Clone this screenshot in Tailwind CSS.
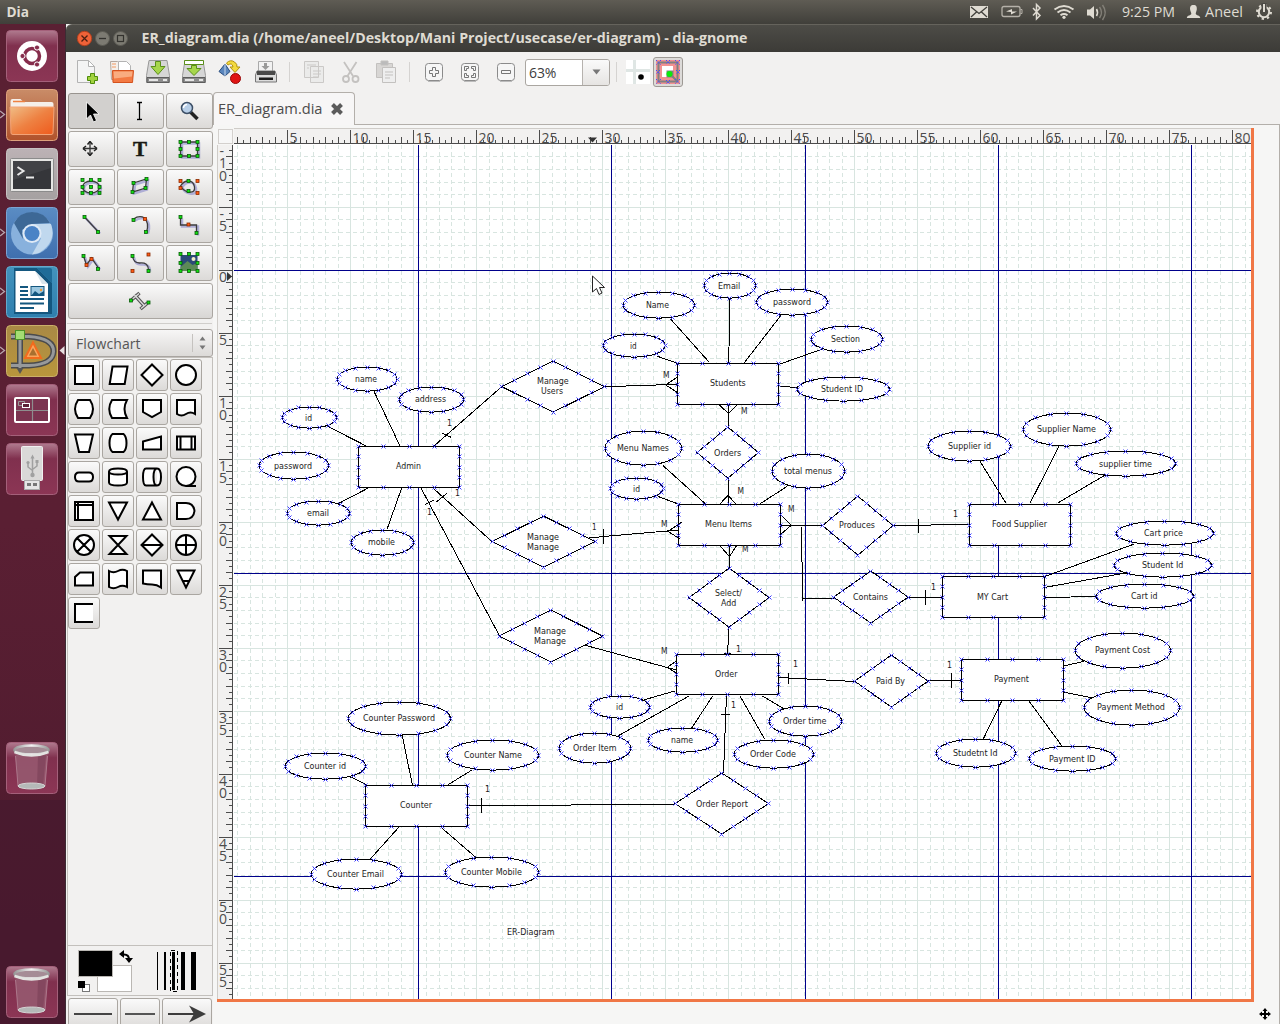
<!DOCTYPE html>
<html lang="en">
<head>
<meta charset="utf-8">
<title>ER_diagram.dia - dia-gnome</title>
<script src="https://cdn.jsdelivr.net/npm/@tailwindcss/browser@4"></script>
</head>
<body class="w-[1280px] h-[1024px] overflow-hidden bg-[#f2f1f0] font-['Open_Sans',sans-serif] text-[#4c4c4c]">
<div class="flex flex-col w-[1280px] h-[1024px] overflow-hidden">

  <!-- top panel -->
  <header class="flex h-[24px] shrink-0 items-center bg-linear-to-b from-[#5f5c54] to-[#403f3a]">
    <svg class="w-[1280px] h-[24px]" viewBox="0 0 1280 24" fill="none" stroke="#dfdbd2">
      <g fill="#dfdbd2" stroke="none" font-family="'Open Sans',sans-serif" font-size="14">
        <text x="6.500" y="17" font-weight="700" textLength="22.500" lengthAdjust="spacingAndGlyphs">Dia</text>
        <text x="1122" y="17" textLength="53" lengthAdjust="spacingAndGlyphs">9:25 PM</text>
        <text x="1205" y="17" textLength="38" lengthAdjust="spacingAndGlyphs">Aneel</text>
      </g>
      <rect x="970" y="6" width="18" height="12" fill="#dfdbd2" stroke="none"/>
      <path d="M971 7l8 6.500 8-6.500M971 17l5.500-5M987 17l-5.500-5" stroke="#403f3a" stroke-width="1.300"/>
      <rect x="1002" y="6.500" width="18" height="10" rx="2" stroke-width="1.300" stroke="#b5b1a9"/>
      <path d="M1020.500 9.500h1.500v4h-1.500" stroke="#b5b1a9"/>
      <path d="M1006 11.500l6-2.500v2.500h5l-6 3v-2.500z" fill="#dfdbd2" stroke="none"/>
      <path d="M1033 8l7 7.500-3.500 3.500v-14.500l3.500 3.500-7 7.500" stroke-width="1.500"/>
      <path d="M1054.500 9.500q9.500-7 19 0M1057.500 12.500q6.500-5 13 0M1060.500 15.300q3.500-2.500 7 0" stroke-width="1.900"/>
      <circle cx="1064" cy="17.300" r="1.600" fill="#dfdbd2" stroke="none"/>
      <path d="M1087 9.500h3l4-3.500v13l-4-3.500h-3z" fill="#dfdbd2" stroke="none"/>
      <path d="M1096.500 9q2 3.500 0 7" stroke-width="1.600"/>
      <path d="M1099.500 7q4 5.500 0 11M1102.500 5q5.500 7.500 0 15" stroke="#827f77" stroke-width="1.500"/>
      <path d="M1193.500 5c3 0 3.500 2 3.300 4.500-.2 2-1.300 3-1 4.500.5 1.500 4 1 4.500 4h-13.500c.5-3 4-2.500 4.500-4 .2-1.500-1-2.500-1.200-4.500-.2-2.500.4-4.500 3.400-4.500z" fill="#dfdbd2" stroke="none"/>
      <circle cx="1264" cy="12" r="5.200" stroke-width="2"/>
      <circle cx="1264" cy="12" r="7" stroke-width="2" stroke-dasharray="2.300 3.200"/>
      <path d="M1264 3v9" stroke="#4b4944" stroke-width="5"/><path d="M1264 4v8" stroke-width="2"/>
    </svg>
  </header>

  <div class="flex grow min-h-0">
    <!-- launcher -->
    <nav class="flex flex-col w-[65px] shrink-0 bg-linear-to-b from-[#5a2033] via-[#5a1f33] to-[#4b1a2d]">
      <svg id="launcher" class="w-[65px] h-[1000px]" viewBox="0 24 65 1000" fill="none">
        <defs>
          <linearGradient id="wine" x1="0" y1="0" x2="0" y2="1"><stop offset="0" stop-color="#b07b8f"/><stop offset=".3" stop-color="#80304e"/><stop offset="1" stop-color="#8c3655"/></linearGradient>
          <linearGradient id="org" x1="0" y1="0" x2="0" y2="1"><stop offset="0" stop-color="#c98c68"/><stop offset="1" stop-color="#b1522b"/></linearGradient>
          <linearGradient id="fold" x1="0" y1="0" x2="1" y2="1"><stop offset="0" stop-color="#f0bd86"/><stop offset=".5" stop-color="#ee8142"/><stop offset="1" stop-color="#ef5a1c"/></linearGradient>
          <linearGradient id="gry" x1="0" y1="0" x2="0" y2="1"><stop offset="0" stop-color="#bcb2b5"/><stop offset="1" stop-color="#a5a1a1"/></linearGradient>
          <linearGradient id="blu" x1="0" y1="0" x2="0" y2="1"><stop offset="0" stop-color="#5a8cc4"/><stop offset="1" stop-color="#3f6fae"/></linearGradient>
          <linearGradient id="teal" x1="0" y1="0" x2="0" y2="1"><stop offset="0" stop-color="#4393bd"/><stop offset="1" stop-color="#2f7fae"/></linearGradient>
          <linearGradient id="gold" x1="0" y1="0" x2="0" y2="1"><stop offset="0" stop-color="#a98945"/><stop offset="1" stop-color="#b9963c"/></linearGradient>
          <linearGradient id="steel" x1="0" y1="0" x2="1" y2="0"><stop offset="0" stop-color="#999"/><stop offset=".5" stop-color="#f3f3f3"/><stop offset="1" stop-color="#999"/></linearGradient>
          <g id="trash">
            <rect x="6.500" y=".5" width="51" height="51" rx="4" fill="url(#wine)" stroke="#a4607a"/>
            <path d="M15 9h33l-3 36q-13 4-27 0z" fill="#96596f" opacity=".9"/>
            <path d="M38 14l-1 30h6l3-31z" fill="#7a3f57" opacity=".6"/>
            <path d="M15.500 14l2.500 30M47.500 14l-2.500 30" stroke="#b98c9d" opacity=".7"/>
            <ellipse cx="31.500" cy="44" rx="13.500" ry="3" fill="#b5b9b8" stroke="#d5d5d5"/>
            <ellipse cx="31.500" cy="8" rx="17" ry="4.500" fill="#a58c96" stroke="url(#steel)" stroke-width="2.500"/>
            <path d="M14.500 10q17 7 34 0" stroke="#e3e3e1" stroke-width="2.500"/>
          </g>
        </defs>
        <path d="M0 800h65v224h-65z" fill="#471a2f" opacity=".75"/>
        <!-- dash -->
        <g transform="translate(0 30)">
          <rect x="6.500" y=".5" width="51" height="51" rx="4" fill="url(#wine)" stroke="#a4607a"/>
          <circle cx="32" cy="26" r="15" fill="#fff"/>
          <circle cx="32" cy="26" r="7.500" stroke="#862d4c" stroke-width="3.500"/>
          <g fill="#862d4c" stroke="#fff" stroke-width="1"><circle cx="22.500" cy="26" r="2.600"/><circle cx="37" cy="17.500" r="2.600"/><circle cx="37" cy="34.500" r="2.600"/></g>
        </g>
        <!-- files -->
        <g transform="translate(0 89)">
          <rect x="6.500" y=".5" width="51" height="51" rx="4" fill="url(#org)" stroke="#dda17c"/>
          <path d="M10.500 21v-9q0-2 2-2h8l3 3h28q2 0 2 2v6z" fill="#f5efe9"/><path d="M13 12.500h12" stroke="#ee8142" stroke-width="1.500"/>
          <path d="M10 18h44l-1 26q0 1.500-2 1.500h-38q-2 0-2-1.500z" fill="url(#fold)" stroke="#f3a377"/>
        </g>
        <!-- terminal -->
        <g transform="translate(0 148)">
          <rect x="6.500" y=".5" width="51" height="51" rx="4" fill="url(#gry)" stroke="#c7c2c2"/>
          <rect x="10.500" y="10.500" width="43" height="33" rx="1" fill="#e6e6e4" stroke="#8b8b8b"/>
          <rect x="13" y="13" width="38" height="28" fill="#35363a"/>
          <path d="M13 13h38v7l-38 12z" fill="#4a4b4f" opacity=".6"/>
          <path d="M17.500 19l6 4-6 4M26 29.500h8" stroke="#e9e9e9" stroke-width="2"/>
        </g>
        <!-- chromium -->
        <g transform="translate(0 207)">
          <rect x="6.500" y=".5" width="51" height="51" rx="4" fill="url(#blu)" stroke="#7ba3d2"/>
          <circle cx="32" cy="26.500" r="21" fill="#88b1dd"/>
          <path d="M14 16q6-11 18-11t18 11l-18 1-10 6 1 9z" fill="#3d6896"/>
          <path d="M32 17h19q6 18-12 29l-7 1.500 9-16z" fill="#c0d8ee"/>
          <circle cx="32" cy="26.500" r="9.500" fill="#dfeaf6"/><circle cx="32" cy="26.500" r="7.500" fill="#4a83c6"/>
        </g>
        <!-- writer -->
        <g transform="translate(0 266)">
          <rect x="6.500" y=".5" width="51" height="51" rx="4" fill="url(#teal)" stroke="#65a9cc"/>
          <path d="M14 2h23l15 15v31H14z" fill="#14577f"/><path d="M37 2l15 15v-13q0-2-2-2z" fill="#1f6c98"/>
          <path d="M15.500 5h19.500l13 13v28h-32.500z" fill="#fff"/><path d="M35 5l13 13h-6z" fill="#d9e5ec"/>
          <path d="M20 21h8M20 25h8M20 29h8M20 33h24M20 37.500h24M20 42h14" stroke="#14577f" stroke-width="1.800"/>
          <rect x="31" y="20.500" width="13" height="9" fill="#9cc8e0" stroke="#14577f"/><path d="M31 30l4-5 4 3 5-3v5z" fill="#14577f"/><circle cx="41" cy="24" r="1.200" fill="#f39a35"/>
        </g>
        <!-- dia -->
        <g transform="translate(0 325)">
          <rect x="6.500" y=".5" width="51" height="51" rx="4" fill="url(#gold)" stroke="#cbb069"/>
          <g stroke="#4a4b4d" stroke-width="6"><path d="M11 11.500h18q25 2 24.500 15t-24.500 14h-18"/><path d="M20 12v32"/></g>
          <g stroke="#97999b" stroke-width="3"><path d="M11 11.500h18q25 2 24.500 15t-24.500 14h-18"/><path d="M20 12v31"/></g>
          <path d="M16.500 43h7l-3.500 6z" fill="#555"/>
          <rect x="15.500" y="5.500" width="9" height="9" fill="#a4dd74" stroke="#4c9227"/>
          <path d="M33 17.500l8 15.500h-16z" fill="#f9a55c" stroke="#f26b1d" stroke-width="2"/><path d="M33 23l4 7.500h-8z" fill="#a96f2f"/>
        </g>
        <!-- workspaces -->
        <g transform="translate(0 384)">
          <rect x="6.500" y=".5" width="51" height="51" rx="4" fill="url(#wine)" stroke="#a4607a"/>
          <rect x="15" y="14" width="34" height="24" rx="1" stroke="#fff" stroke-width="2" fill="#7b3450"/>
          <path d="M32.500 15v22M16 26.500h32" stroke="#8e8e8e" stroke-width="1.200"/>
          <path d="M18.500 17.500h6v4h-6z" stroke="#999"/><rect x="22.500" y="19.500" width="7" height="4" stroke="#fff" fill="#5c2035"/>
        </g>
        <!-- usb -->
        <g transform="translate(0 443)">
          <rect x="6.500" y=".5" width="51" height="51" rx="4" fill="url(#wine)" stroke="#a4607a"/>
          <rect x="21.500" y="3.500" width="21" height="34" rx="1" fill="#dad9d8" stroke="#f0f0f0"/>
          <rect x="24.500" y="37.500" width="15" height="9" fill="#e6e6e6" stroke="#aaa"/><path d="M27 40h4v3h-4zM33 40h4v3h-4z" fill="#777"/>
          <path d="M32.500 14v17M28 20v4l4.500 3.500M37 19v4l-4.500 3.500" stroke="#a0a0a0" stroke-width="1.500"/><path d="M30.500 15.500l2-4 2 4z" fill="#a0a0a0"/><circle cx="32.500" cy="32" r="2.200" fill="#a0a0a0"/><circle cx="28" cy="19.500" r="1.600" fill="#a0a0a0"/><path d="M35.500 17h3v3h-3z" fill="#a0a0a0"/>
        </g>
        <use href="#trash" y="742"/>
        <use href="#trash" y="966"/>
        <path d="M0 111l4.500 3.500-4.500 3.500M0 229l4.500 3.500-4.500 3.500M0 288l4.500 3.500-4.500 3.500M0 347l4.500 3.500-4.500 3.500" stroke="#b9a5ad" stroke-width="1.300"/>
        <path d="M64.500 346v9l-5-4.500z" fill="#e6dfe0"/>
      </svg>
    </nav>
    <div class="w-px shrink-0 bg-[#3c2b33]"></div>

    <!-- window -->
    <main class="flex flex-col grow min-w-0">
      <div class="flex h-[28px] shrink-0 rounded-tl-md border-t border-[#65635c] bg-linear-to-b from-[#4d4c47] to-[#3c3b37]">
        <svg class="w-[1214px] h-[27px]" viewBox="66 25 1214 27" fill="none">
          <circle cx="84.500" cy="38.500" r="7.200" fill="#ee6238" stroke="#b03f1d"/>
          <path d="M81.500 35.500l6 6M87.500 35.500l-6 6" stroke="#4a1f10" stroke-width="1.300"/>
          <circle cx="102.500" cy="38.500" r="7" fill="#7c7a72" stroke="#5c5b54"/><path d="M99 38.500h7" stroke="#33322e" stroke-width="1.300"/>
          <circle cx="120.500" cy="38.500" r="7" fill="#7c7a72" stroke="#5c5b54"/><rect x="117.500" y="35.500" width="6" height="6" stroke="#33322e" stroke-width="1.200"/>
          <text x="141.500" y="43" font-family="'Open Sans',sans-serif" font-weight="700" font-size="14" fill="#dfdbd2" textLength="606" lengthAdjust="spacingAndGlyphs">ER_diagram.dia (/home/aneel/Desktop/Mani Project/usecase/er-diagram) - dia-gnome</text>
        </svg>
      </div>

      <!-- toolbar -->
      <div class="flex h-[40px] shrink-0 items-center pl-[3px]">
        <svg class="w-[36px] h-[36px]" viewBox="69 54 36 36" fill="none"><path d="M77.500 60.500h11l6 6v16h-17z" fill="#f4f4f4" stroke="#b3b3b3"/><path d="M88.500 60.500l6 6h-6z" fill="#fff" stroke="#b3b3b3"/><path d="M90.500 73.500h4v3h3v4h-3v3h-4v-3h-3v-4h3z" fill="#a2d23f" stroke="#4e8c0a"/></svg>
        <svg class="w-[36px] h-[36px]" viewBox="105 54 36 36" fill="none"><path d="M110.500 61.500h7l3 3v15h-9z" fill="#f4f0ec" stroke="#b3a79f"/><path d="M118.500 61.500h8l4 4v9h-12z" fill="#fff" stroke="#b3b3b3"/><path d="M112 64h4M112 67h4" stroke="#f39a62"/><path d="M112.500 70.500h21l-1 12h-19.500z" fill="#f37a43" stroke="#d4521e"/><path d="M113.500 71.500h19l-.5 5-18 2z" fill="#f9ac80"/></svg>
        <svg class="w-[36px] h-[36px]" viewBox="141 54 36 36" fill="none"><path d="M149 60.500h18l2.500 15v7h-23v-7z" fill="#d6d6d6" stroke="#999"/><path d="M147 77.500h22v5h-22z" fill="#8d8d8d" stroke="#5d5d5d"/><path d="M149 80h9M163 80h4" stroke="#e6e6e6" stroke-width="2"/><path d="M155.500 61.500h5v5h4.500l-7 8-7-8h4.500z" fill="#a6d64b" stroke="#5a8f1a"/></svg>
        <svg class="w-[36px] h-[36px]" viewBox="177 54 36 36" fill="none"><path d="M185 60.500h18l2.500 15v7h-23v-7z" fill="#d6d6d6" stroke="#999"/><path d="M183 77.500h22v5h-22z" fill="#8d8d8d" stroke="#5d5d5d"/><path d="M185 80h9M199 80h4" stroke="#e6e6e6" stroke-width="2"/><path d="M191.500 65.500h5v3h4.500l-7 7-7-7h4.500z" fill="#a6d64b" stroke="#5a8f1a"/><path d="M184.500 60.500h19v4h-19z" fill="#fff" stroke="#5a8f1a"/></svg>
        <svg class="w-[36px] h-[36px]" viewBox="213 54 36 36" fill="none"><path d="M219 71.500l6-7.500 5 7.500-5 4.500z" fill="#5a86bd" stroke="#274b7d"/><path d="M225 64v12" stroke="#c9d9ec"/><path d="M226.500 63q4-4 8-1 3 2 2.500 5h3l-5 5.500-5-5.500h3q-1-5-5-2z" fill="#f3da3e" stroke="#b39310"/><circle cx="235.500" cy="78.500" r="5" fill="#e01414" stroke="#980808"/></svg>
        <svg class="w-[36px] h-[36px]" viewBox="249 54 36 36" fill="none"><path d="M258.500 61.500h14v11h-14z" fill="#f2f2f2" stroke="#aaa"/><path d="M264 63h3v3h2.500l-4 4-4-4h2.500z" fill="#999"/><path d="M257 71h18l1.500 4v7h-21v-7z" fill="#dcdcdc" stroke="#777"/><path d="M257 71h18v4h-18z" fill="#4a4a4a"/><path d="M259 77.500h14v2.500h-14z" fill="#1f1f1f"/></svg>
        <div class="w-px h-[20px] ml-[4px] mr-[6px] bg-[#d5d3d1]"></div>
        <svg class="w-[36px] h-[36px]" viewBox="296 54 36 36" fill="#ebebea" stroke="#cbc9c7"><path d="M304.500 61.500h14v16h-14zM310.500 66.500h13v16h-13z"/><path d="M307 65h9M307 68h2M313 71h8M313 74h8M313 77h5"/></svg>
        <svg class="w-[36px] h-[36px]" viewBox="332 54 36 36" fill="none" stroke="#c4c2c0" stroke-width="1.800"><path d="M344 62l9 14M356.500 62l-9 14" /><circle cx="346" cy="79" r="3"/><circle cx="355.500" cy="79" r="3"/></svg>
        <svg class="w-[36px] h-[36px]" viewBox="368 54 36 36" fill="#d8d6d4" stroke="#c3c1bf"><path d="M376.500 63.500h16v14h-16z"/><path d="M381 61h7v4h-7z" fill="#bbb"/><path d="M382.500 67.500h13v15h-13z" fill="#eee"/><path d="M385 72h8M385 75h8M385 78h5"/></svg>
        <div class="w-px h-[20px] ml-[5px] mr-[6px] bg-[#d5d3d1]"></div>
        <svg class="w-[36px] h-[36px]" viewBox="416 54 36 36" fill="#f6f6f6" stroke="#8b8b8b"><path d="M428 81.500h12" stroke="#bbb"/><rect x="425.500" y="63.500" width="17" height="17" rx="3"/><path d="M432.500 67.500h3v3h3v3h-3v3h-3v-3h-3v-3h3z" stroke="#777"/></svg>
        <svg class="w-[36px] h-[36px]" viewBox="452 54 36 36" fill="#f6f6f6" stroke="#8b8b8b"><path d="M464 81.500h12" stroke="#bbb"/><rect x="461.500" y="63.500" width="17" height="17" rx="3"/><path d="M464.500 70.500v-4h4v2h-2v2zM471.500 66.500h4v4h-2v-2h-2zM464.500 73.500v4h4v-2h-2v-2zM475.500 73.500v4h-4v-2h2v-2z" stroke="#777"/></svg>
        <svg class="w-[36px] h-[36px]" viewBox="488 54 36 36" fill="#f6f6f6" stroke="#8b8b8b"><path d="M500 81.500h12" stroke="#bbb"/><rect x="497.500" y="63.500" width="17" height="17" rx="3"/><path d="M501.500 70.500h9v3h-9z" stroke="#777"/></svg>
        <div class="flex items-center w-[85px] h-[27px] ml-px rounded-[3px] border border-[#aaa6a1] bg-white overflow-hidden">
          <span class="w-[56px] pl-[3px] text-[14px] tracking-[-0.1px] text-[#3c3c3c]">63%</span>
          <div class="flex items-center justify-center grow h-full border-l border-[#b6b2ae] bg-linear-to-b from-[#fafafa] to-[#e6e4e2]">
            <svg class="w-[9px] h-[6px]" viewBox="0 0 9 6"><path d="M.5.500h8l-4 5z" fill="#777"/></svg>
          </div>
        </div>
        <div class="w-px h-[20px] ml-[6px] mr-[9px] bg-[#d5d3d1]"></div>
        <svg class="w-[24px] h-[24px]" viewBox="0 0 24 24"><path d="M0 0h24v24H0z" fill="#fff"/><path d="M8.500 0v24M0 10.500h24" stroke="#dfe6e4" stroke-width="3"/><circle cx="15" cy="17" r="2.800"/></svg>
        <div class="flex items-center justify-center w-[30px] h-[30px] ml-[3px] rounded-[3px] border border-[#9d9994] bg-[#dddbd9]">
          <svg class="w-[24px] h-[24px]" viewBox="0 0 24 24" fill="none"><path d="M0 0h24v24H0z" fill="#f19191"/><path d="M2.500 2.500h19v19h-19z" stroke="#808080" stroke-width="2"/><path d="M6 6h11v11H6z" fill="#fff"/><path d="M10.500 10.500h7v7h-7z" fill="#808080"/><circle cx="13.500" cy="14" r="3" fill="#0de80d"/><path d="M16 16l5 5" stroke="#808080" stroke-width="2"/><g stroke="#4d4dff" stroke-dasharray="1.500 1"><path d="M0 0l5 5M5 0L0 5M19 0l5 5M24 0l-5 5M0 19l5 5M5 19l-5 5M19 19l5 5M24 19l-5 5M10 0l4 4M14 0l-4 4M0 10l4 4M4 10l-4 4M20 10l4 4M24 10l-4 4M10 20l4 4M14 20l-4 4"/></g></svg>
        </div>
      </div>

      <div class="flex grow min-h-0">
        <!-- tool palette -->
        <aside class="flex flex-col w-[147px] shrink-0 pt-px overflow-hidden">
          <div id="tools" class="grid shrink-0 grid-cols-[47px_47px_47px] gap-x-[2px] gap-y-[2px] pl-[2px]"></div>
          <div class="h-px shrink-0 mt-[4px] mx-px bg-[#d0cecb]"></div>
          <div class="flex shrink-0 items-center justify-between w-[145px] h-[28px] ml-[2px] mt-[5px] pl-[7px] pr-[6px] rounded-[3px] border border-[#a9a5a1] bg-linear-to-b from-[#f7f6f6] to-[#dcdad8]">
            <span class="text-[14px] tracking-[0.1px] text-[#555]">Flowchart</span>
            <div class="flex items-center h-[18px] pl-[6px] border-l border-[#c5c2bf]"><svg class="w-[7px] h-[16px]" viewBox="0 0 7 16" fill="#777"><path d="M3.500 1.500l3 4h-6zM3.500 14.500l3-4h-6z"/></svg></div>
          </div>
          <div class="flex shrink-0 flex-col h-[589px] ml-px border border-[#c3c0bc]">
            <div id="shapes" class="grid grid-cols-[32px_32px_32px_32px] gap-[2px] pt-px"></div>
          </div>
          <div class="h-[50px] shrink-0 ml-px border-x border-b border-[#c3c0bc]">
            <svg class="w-[145px] h-[49px]" viewBox="68 946 145 49" fill="none" shape-rendering="crispEdges">
              <rect x="97.500" y="965.500" width="34" height="26" fill="#fff" stroke="#bab7b3"/>
              <rect x="78.500" y="950.500" width="34" height="26" fill="#000" stroke="#bab7b3"/>
              <rect x="82.500" y="984.500" width="7" height="7" fill="#fff" stroke="#777"/><rect x="78" y="981" width="7" height="7" fill="#000"/>
              <path d="M121 954.500h3q5 0 5 5v2" stroke="#000" stroke-width="2" shape-rendering="auto"/><path d="M124 950v8l-5-4zM125 958h8l-4 5z" fill="#000" shape-rendering="auto"/>
              <path d="M157.500 952v38" stroke="#000"/><path d="M165 952v38" stroke="#000" stroke-width="2"/><path d="M173.500 952v38" stroke="#000" stroke-width="3"/><path d="M183 952v38" stroke="#000" stroke-width="4"/><path d="M193.500 952v38" stroke="#000" stroke-width="5"/>
              <path d="M170.500 950.500h7v41h-7z" stroke="#000" stroke-dasharray="4 3"/>
            </svg>
          </div>
          <div class="flex shrink-0 gap-[2px] pl-[2px] pt-[2px]">
            <div class="flex justify-center w-[50px] h-[32px] pt-[14px] rounded-[3px] border border-[#aaa6a1] bg-linear-to-b from-[#fafafa] to-[#dcdad8]"><div class="w-[38px] h-[2px] bg-[#444]"></div></div>
            <div class="flex justify-center w-[40px] h-[32px] pt-[14px] rounded-[3px] border border-[#aaa6a1] bg-linear-to-b from-[#fafafa] to-[#dcdad8]"><div class="w-[30px] h-[2px] bg-[#555]"></div></div>
            <div class="flex justify-center w-[50px] h-[32px] pt-[5px] rounded-[3px] border border-[#aaa6a1] bg-linear-to-b from-[#fafafa] to-[#dcdad8]"><svg class="w-[40px] h-[20px]" viewBox="0 0 40 20"><path d="M1 10h26" stroke="#3c3c3c" stroke-width="2"/><path d="M22 1.500l17 8.500-17 8.500 5-8.500z" fill="#3c3c3c"/></svg></div>
          </div>
        </aside>

        <!-- notebook -->
        <section class="flex flex-col grow min-w-0">
          <div class="flex h-[33px] shrink-0">
            <div class="flex items-center w-[142px] h-[33px] rounded-t-[4px] border border-b-0 border-[#b3afaa] bg-[#f7f6f6]">
              <svg class="w-[140px] h-[32px]" viewBox="214 93 140 32"><text x="218" y="114" font-family="'Open Sans',sans-serif" font-size="14" fill="#4c4c4c" textLength="104.500" lengthAdjust="spacingAndGlyphs">ER_diagram.dia</text><path d="M332.500 104.500l9 9M341.500 104.500l-9 9" stroke="#5b5b5b" stroke-width="4"/></svg>
            </div>
            <div class="grow border-b border-[#b3afaa]"></div>
          </div>
          <div class="flex flex-col grow w-[1067px] pl-[4px] pt-[3px] border-r border-[#b3afaa] bg-[#f6f6f5]">
            <div class="grid grid-cols-[17px_1017px_3px] grid-rows-[17px_854px_3px]">
              <div class="m-px border border-[#d3d0cd] bg-[#f7f7f7]"></div>
              <svg id="hruler" class="w-[1017px] h-[17px] bg-[#f2f1f0]" viewBox="234 128 1017 17"></svg>
              <div class="row-span-3 bg-[#f07746]"></div>
              <svg id="vruler" class="w-[17px] h-[854px] bg-[#f2f1f0]" viewBox="217 145 17 854"></svg>
              <svg id="canvas" class="w-[1017px] h-[854px] bg-white" viewBox="234 145 1017 854"></svg>
              <div class="col-span-2 bg-[#f07746]"></div>
            </div>
            <div class="flex justify-end pt-[6px] pr-[8px]">
              <svg class="w-[12px] h-[12px]" viewBox="0 0 12 12"><path d="M6 0l2.500 3h-1.500v2h2v-1.500l3 2.500-3 2.500v-1.500h-2v2h1.500l-2.500 3-2.500-3h1.500v-2h-2v1.500l-3-2.500 3-2.500v1.500h2v-2h-1.500z"/></svg>
            </div>
          </div>
        </section>
      </div>
    </main>
  </div>
</div>

<script>
const $ = id => document.getElementById(id);

// ---- tool buttons ----
const H = (f, s) => (...p) => p.map(([x, y]) => `<rect x="${x - 1.5}" y="${y - 1.5}" width="3" height="3" fill="${f}" stroke="${s}" stroke-width=".8"/>`).join('');
const G = H('#10e010', '#0a5a0a'), O = H('#ff5a14', '#8a2a00');
const L = d => `<path d="${d}" transform="translate(1.500 1.500)" stroke="#8080c8" stroke-width="2.500" opacity=".55"/><path d="${d}" stroke="#3c3c3c" stroke-width="1.300"/>`;
const tools = [
  '<path d="M18 9v17l4-4 3 7 3-1.500-3-6.500h5.500z" fill="#000" stroke="#fff" stroke-width=".8"/>',
  '<path d="M20 9.500h2M24 9.500h-2M20 26.500h4M22 9.500v17" stroke="#fff" stroke-width="3"/><path d="M19.500 9.500h5M19.500 26.500h5M22 9.500v17" stroke="#000" stroke-width="1.400"/>',
  '<path d="M24 19l7 7" stroke="#222" stroke-width="3.500"/><circle cx="20.500" cy="15" r="5.500" fill="#b8cfe8" stroke="#3d4f66" stroke-width="1.500"/><path d="M17 15q0-3 3.500-3.500" stroke="#fff" stroke-width="1.500"/>',
  '<path d="M14.500 17.500h14M21.500 10.500v14" stroke="#333" stroke-width="1.300"/><path d="M21.500 10.500l-2.500 3M21.500 10.500l2.500 3M21.500 24.500l-2.500-3M21.500 24.500l2.500-3M14.500 17.500l3-2.500M14.500 17.500l3 2.500M28.500 17.500l-3-2.500M28.500 17.500l-3 2.500" stroke="#222" stroke-width="1.500"/>',
  '<text x="15.500" y="25" font-family="\'Liberation Serif\',serif" font-weight="700" font-size="21" fill="#1a1a14" stroke="#1a1a14" stroke-width=".5">T</text>',
  L('M14 11h17v14h-17z') + G([14, 11], [22.500, 11], [31, 11], [14, 18], [31, 18], [14, 25], [22.500, 25], [31, 25]),
  L('M14 18a8.500 6 0 1 0 17 0a8.500 6 0 1 0-17 0') + G([14, 11], [22.500, 11], [31, 11], [14, 18], [22.500, 18], [31, 18], [14, 24], [22.500, 24], [31, 24]),
  L('M16 14l13-4-1 9-13 4z') + G([16, 14], [29, 10], [28, 19], [15, 23]),
  L('M14 17q3-5 8-5t6 6-6 5q-5-1-8-6z') + G([22, 12], [22, 22]) + O([14, 12], [31, 12], [14, 19], [31, 24]),
  L('M16 10l14 15') + G([16, 10], [29.500, 25]),
  L('M16 12q6-4 11-1 5 5 2 14') + G([16, 13], [28.500, 25]) + O([27.500, 12]),
  L('M14 10v8h16v9') + G([14, 10], [30, 26]) + O([22, 17.500]),
  L('M15 11l3 9 5-7 7 10') + G([15, 11], [29.500, 24]) + O([18, 20], [23, 14]),
  L('M15 11q1 7 7 7 9-1 9 7') + G([15, 11], [31, 26]) + O([31, 9.500], [15, 26]),
  '<path d="M14 10h17v16H14z" fill="#2b4a78"/><path d="M14 22l7-6 5 4 5-2v8H14z" fill="#5c8a57"/><circle cx="27" cy="14" r="2" fill="#f4efc8"/>' + G([14, 9], [22.500, 9], [31, 9], [14, 18], [31, 18], [14, 26], [22.500, 26], [31, 26])
];
$('tools').innerHTML = tools.map((t, i) =>
  `<div class="${i ? 'flex h-[36px] items-center justify-center rounded-[3px] border border-[#aaa6a1] bg-linear-to-b from-[#fafafa] to-[#dcdad8]' : 'flex h-[36px] items-center justify-center rounded-[3px] border border-[#98948f] bg-[#d2d0ce]'}"><svg class="w-[45px] h-[34px]" viewBox="0.5 1 45 34" fill="none">${t}</svg></div>`).join('') +
  `<div class="col-span-3 flex h-[36px] items-center justify-center rounded-[3px] border border-[#aaa6a1] bg-linear-to-b from-[#fafafa] to-[#d8d6d4]"><svg class="w-[45px] h-[34px]" viewBox="0.5 1 45 34" fill="none"><path d="M17 12l10 11M14 17l8-7M23 26l7-6" stroke="#555" stroke-width="3.500"/><path d="M17 12l10 11M14.500 16.500l7-6M23.500 25.500l6-5" stroke="#ddd" stroke-width="1.300"/>${G([13.5, 17.5], [31, 19.5])}</svg></div>`;

// ---- flowchart sheet ----
const shapes = [
  'M6 6h18v18H6z', 'M6.700 24L9.500 6.500h15L21.700 24z', 'M15 4.500L25.500 15 15 25.500 4.500 15z', 'M5 15a10 10 0 1 0 20 0a10 10 0 1 0-20 0',
  'M9 6h12q6 9 0 18H9q-6-9 0-18z', 'M9 6h15q-5 9 0 18H9q-5.500-9 0-18z', 'M6 6h18v12l-9 5-9-5z', 'M6 6h18v14q-4.500-3-9 0t-9 0z',
  'M6 6.500h18L20 24h-10z', 'M9.500 6h11q3 2.500 3 9t-3 9h-11q-3-2.500-3-9t3-9z', 'M6 13.500L24 8.500V21.500H6z', 'M6 8.500h18v13H6zM9.500 8.500v13M20.500 8.500v13',
  'M10 10.500h10q4 0 4 4.500t-4 4.500H10q-4 0-4-4.500t4-4.500z', 'M6 9.500q0-3 9-3t9 3v11q0 3-9 3t-9-3zM6 9.500q0 3 9 3t9-3', 'M9 6.500h11q4 0 4 8.500t-4 8.500H9q-3 0-3-8.500t3-8.500zM20 6.500q-3.500 0-3.500 8.500t3.500 8.500', 'M5.500 14.500a9.500 9.500 0 1 1 9.500 9.500a9.500 9.500 0 0 1-9.500-9.500M15 24h10',
  'M6 6h18v18H6zM9 6v18M6 9h18', 'M6 6.500h18L15 23.500z', 'M15 6.500l9 17H6z', 'M6 7h9q7.500 0 8.500 8-1 8-8.500 8H6z',
  'M5 15a10 10 0 1 0 20 0a10 10 0 1 0-20 0M8 8l14 14M22 8L8 22', 'M6.500 6h17L6.500 24h17z', 'M15 4.500L25.500 15 15 25.500 4.500 15zM4.500 15h21', 'M5 15a10 10 0 1 0 20 0a10 10 0 1 0-20 0M5 15h20M15 5v20',
  'M11 8.500h13v13H6v-8.500z', 'M6 7q4.500 2.500 9 0t9 0v16q-4.500-2.500-9 0t-9 0z', 'M6 6.500h18v17q-4-3-9-3t-9-1z', 'M6.500 6.500h17L15 23.500zM11.500 17h7', 'M24 6H6v18h18'
];
$('shapes').innerHTML = shapes.map(d =>
  `<div class="flex items-center justify-center h-[32px] rounded-[3px] border border-[#aaa6a1] bg-linear-to-b from-[#fafafa] to-[#dcdad8]"><svg class="w-[30px] h-[30px]" viewBox="0 0 30 30"><path d="${d}" fill="#fff" stroke="#000" stroke-width="2"/></svg></div>`).join('');

// ---- rulers ----
const X0 = 287.9 - 63, Y0 = 270.2, U = 12.6;
let h = '', v = '';
for (let i = 2; i <= 160; i++) {
  const x = Math.floor(X0 + i * U / 2) + .5;
  if (x > 1250 || x < 234) continue;
  const top = i % 10 === 0 ? 130 : i % 2 === 0 ? 137 : 140;
  h += `<path d="M${x} ${top}V143" stroke="#4c4c4c"/>`;
  if (i % 10 === 0) h += `<text x="${x + 2}" y="142.500">${i / 2}</text>`;
}
$('hruler').innerHTML = `<path d="M234 128.500h1017" stroke="#cfccc8"/><g font-family="'Open Sans',sans-serif" font-size="14" fill="#4c4c4c">${h}</g><path d="M234 143.500h1017" stroke="#4c4c4c"/><path d="M588 137.500h9l-4.500 5z" fill="#333"/><path d="M234 144h1017v1H234z" fill="#fff"/>`;
for (let i = -20; i <= 115; i++) {
  const y = Math.floor(Y0 + i * U / 2) + .5;
  const left = i % 10 === 0 ? 219 : i % 2 === 0 ? 226 : 229;
  v += `<path d="M${left} ${y}H232" stroke="#4c4c4c"/>`;
  if (i % 10 === 0) String(i / 2).split('').forEach((c, k) => v += `<text x="${c === '-' ? 219.5 : 219}" y="${y + 11.500 + 12.3 * k}">${c}</text>`);
}
$('vruler').innerHTML = `<path d="M217.500 145v854" stroke="#cfccc8"/><g font-family="'Open Sans',sans-serif" font-size="14" fill="#4c4c4c">${v}</g><path d="M232.500 145v854" stroke="#4c4c4c"/><path d="M227 272v9l5-4.500z" fill="#333"/><path d="M233 145h1v854h-1z" fill="#fff"/>`;

// ---- canvas ----
let g = '';
for (let k = -4; k <= 77; k++) {
  const x = Math.floor(287.9 + k * U) + .5;
  g += `<path d="M${x} 145V999"${k % 5 ? ' stroke-dasharray="4 3"' : ''}/>`;
}
for (let k = -9; k <= 57; k++) {
  const y = Math.floor(Y0 + k * U) + .5;
  g += `<path d="M234 ${y}H1251"${k % 5 ? ' stroke-dasharray="4 3"' : ''}/>`;
}
const pages = [418.5, 611.5, 805.5, 998.5, 1191.5].map(x => `<path d="M${x} 145V999"/>`).join('') +
  [270.5, 573.5, 876.5].map(y => `<path d="M234 ${y}H1251"/>`).join('');

// kind, left, top, right, bottom
const nodes = [
  ['r', 677.5, 363.5, 778.5, 404.5], ['r', 678.5, 504.5, 780.5, 545.5], ['r', 358.5, 446.5, 459.5, 487.5], ['r', 969.5, 504.5, 1070.5, 545.5],
  ['r', 942.5, 576.5, 1044.5, 617.5], ['r', 961.5, 659.5, 1063.5, 700.5], ['r', 676.5, 654.5, 778.5, 694.5], ['r', 365.5, 785.5, 467.5, 826.5],
  ['d', 502, 361.5, 605, 412.5], ['d', 492.5, 516.5, 595.5, 567.5], ['d', 499.5, 610.5, 603, 662.5], ['d', 697.5, 427.5, 759, 478.5],
  ['d', 823, 496.5, 893.5, 555.5], ['d', 834, 571.5, 908.5, 623.5], ['d', 855, 655.5, 928.5, 707.5], ['d', 689.5, 568.5, 769.5, 627.5], ['d', 675.5, 773.5, 769, 834.5],
  ['e', 704.5, 273.5, 756, 298.5], ['e', 623.5, 292.5, 695, 318.5], ['e', 757, 289.5, 828, 315.5], ['e', 811.5, 326.5, 883, 352.5],
  ['e', 603.5, 334.5, 665.5, 357.5], ['e', 797.5, 377.5, 890, 401.5], ['e', 605.5, 431.5, 682, 465.5], ['e', 610.5, 478.5, 663.5, 499.5],
  ['e', 772.5, 454.5, 845, 488.5], ['e', 337.5, 367.5, 397.5, 391.5], ['e', 399.5, 387.5, 464, 412.5], ['e', 282.5, 407.5, 337, 428.5],
  ['e', 259.5, 452.5, 329, 479.5], ['e', 287.5, 501.5, 350, 525.5], ['e', 351.5, 530.5, 414, 555.5], ['e', 928.5, 431.5, 1011, 461.5],
  ['e', 1023.5, 413.5, 1111, 446.5], ['e', 1076.5, 451.5, 1176, 476.5], ['e', 1116.5, 521.5, 1214, 545.5], ['e', 1114.5, 553.5, 1212, 577.5],
  ['e', 1096.5, 584.5, 1194, 608.5], ['e', 1075.5, 633.5, 1171, 668.5], ['e', 1084.5, 690.5, 1180, 725.5], ['e', 936.5, 739.5, 1016, 767.5],
  ['e', 1029.5, 746.5, 1116, 771.5], ['e', 590.5, 696.5, 650, 718.5], ['e', 559.5, 733.5, 631, 763.5], ['e', 648.5, 728.5, 718, 752.5],
  ['e', 734.5, 740.5, 814, 768.5], ['e', 769.5, 706.5, 842, 736.5], ['e', 348.5, 702.5, 451, 735.5], ['e', 285.5, 753.5, 366, 779.5],
  ['e', 447.5, 740.5, 539, 770.5], ['e', 311.5, 859.5, 402, 889.5], ['e', 445.5, 857.5, 539, 887.5]
];
let body = '', marks = '';
const mark = (x, y) => { x = Math.floor(x) + .5; y = Math.floor(y) + .5; marks += `M${x - 2} ${y - 2}l4 4M${x + 2} ${y - 2}l-4 4`; };
for (const [k, ...box] of nodes) {
  const [l, t, r, b] = k === 'r' ? box : box.map(n => n - .4);
  const cx = (l + r) / 2, cy = (t + b) / 2, w = r - l, hh = b - t;
  if (k === 'r') {
    body += `<rect x="${l}" y="${t}" width="${w}" height="${hh}"/>`;
    for (let i = 0; i <= 4; i++) { mark(l + w * i / 4, t); mark(l + w * i / 4, b); if (i % 4) { mark(l, t + hh * i / 4); mark(r, t + hh * i / 4); } }
  } else if (k === 'd') {
    body += `<path d="M${cx} ${t}L${r} ${cy} ${cx} ${b} ${l} ${cy}z"/>`;
    for (let i = 0; i < 4; i++) { const a = w / 2 * i / 4, c = hh / 2 * i / 4; mark(cx + a, t + c); mark(r - a, cy + c); mark(cx - a, b - c); mark(l + a, cy - c); }
  } else {
    body += `<ellipse cx="${cx}" cy="${cy}" rx="${w / 2}" ry="${hh / 2}"/>`;
    for (let i = 0; i < 16; i++) mark(cx + w / 2 * Math.cos(i * Math.PI / 8), cy + hh / 2 * Math.sin(i * Math.PI / 8));
  }
}
const links = `M670.300 318.700L708.700 361.700M729.500 298V331L728.500 363M781 315.300L744.300 362.700M821.700 349.300L780 364M656.700 356L677.300 363.300M780.300 386.300L797.300 387.500
M604.700 386.700L677.700 384.300M677.700 376.700L665.700 385L677.700 392.700M501.700 386.700L434 446M442.300 433L451 437.300
M728.500 404.300V427M719.700 405.300L728.500 413.500L736.500 405.300M728.500 478.300V504M719.700 504.300L728 495.300L736 504.300
M662.700 465.300L705.300 503.700M657.700 496.300L677.300 503.700M787.300 486.300L759.300 504.300M780.300 525.500H823M781 515.300L791.300 525.300L781 534
M589 538L603.500 536.500L678.700 530M603.500 529V543.700M681.700 522.300L668 531.300L680.300 539.300
M433 488L492.300 542M436.300 502L447.300 493M421 488L499.700 636.300M425 504.500L434.300 500
M374 391.300L400 446M328.300 426.700L366.300 446M339 503.300L368.300 488M387 529.300L401.700 488
M585.300 645.300L676.300 670M676.300 661L667.300 667.300L676.300 673.300M729.500 545.300V568M720.300 546L729.500 556.700L736.300 546
M728.700 627.300L727.700 654M724 653.500H731M643.700 700L674.700 691M617.300 736.300L689 696M691.700 728L712.700 696M726.500 694.300L723.500 773.300M721.300 714.500H730
M740 696L764.700 739.300M762.300 696L784.300 709M778.700 677.500L854.300 681.500M788.500 673.300V683.700M928.300 680.500H961.300M951.500 673.300V688
M675 804.500H571M571 805.500H467.500M481.500 798.300V812.700M893.700 525.500H931M931 524.500H969.300M918.500 519V532.700M801.500 526.500V562M802.500 562V600.500M802.700 598.500H834
M908.300 597.500H942.300M925.500 590.300V604.700M980 461.300L1005.700 502.700M1059 446.300L1030.300 502.700M1104.700 475.300L1058.300 502.700
M1134.300 544L1045.300 576.300M1127.300 572.700L1045.300 587.300M1096.300 596.500L1045.300 597.500M1084.300 661.300L1063.300 666M1093.300 698L1063.300 692M983.300 739L1001.700 701M1061.700 745.700L1029 701
M402.300 735.300L412.300 784.700M350 776.700L366.300 784.700M472 770L448 784.700M370.300 859L399 827M475.700 857.300L441 827.300`;

// text, left, right, baseline
const labels = [
  ['Email', 718, 740.3, 289], ['Name', 646, 669, 308], ['password', 773, 811, 305], ['Section', 831, 860, 342], ['id', 630, 636.7, 349], ['Students', 710, 745.7, 386],
  ['Student ID', 821, 863, 392], ['Orders', 714, 741.3, 456], ['Menu Names', 617, 669, 451], ['id', 633, 640, 492], ['total menus', 784, 832, 474], ['Menu Items', 705, 752, 527],
  ['Produces', 839, 875, 528], ['Manage', 537, 568.7, 384], ['Users', 541, 563, 394], ['Manage', 527, 559, 540], ['Manage', 527, 559, 550], ['Manage', 534, 566, 634], ['Manage', 534, 566, 644],
  ['name', 355, 377, 382], ['address', 415, 446, 402], ['id', 305, 312, 421], ['Admin', 396, 421, 469], ['password', 274, 312, 469], ['email', 307, 329, 516], ['mobile', 368, 395, 545],
  ['Supplier id', 948, 991, 449], ['Supplier Name', 1037, 1096, 432], ['supplier time', 1099, 1152, 467], ['Food Supplier', 992, 1047, 527], ['Cart price', 1144, 1183, 536],
  ['Student Id', 1142, 1183.3, 568], ['Cart id', 1131, 1157.5, 599], ['MY Cart', 977, 1008, 600], ['Contains', 853, 888, 600], ['Paid By', 876, 905, 684], ['Payment', 994, 1029, 682],
  ['Payment Cost', 1095, 1150, 653], ['Payment Method', 1097, 1165, 710], ['Studetnt Id', 953, 997.5, 756], ['Payment ID', 1049, 1095.5, 762], ['Select/', 715, 742, 596], ['Add', 721, 736.3, 606],
  ['Order', 715, 737.5, 677], ['Order Item', 573, 616.5, 751], ['id', 616, 623, 710], ['name', 671, 693, 743], ['Order time', 783, 826.5, 724], ['Order Code', 750, 796, 757], ['Order Report', 696, 748, 807],
  ['Counter Password', 363, 435, 721], ['Counter id', 304, 346, 769], ['Counter Name', 464, 522, 758], ['Counter', 400, 432, 808], ['Counter Email', 327, 384, 877], ['Counter Mobile', 461, 522, 875],
  ['ER-Diagram', 507, 554.5, 935],
  ['M', 663, 669.5, 378], ['M', 741, 747.5, 414], ['M', 737.5, 744, 494], ['M', 788, 794.5, 512], ['M', 661, 667.5, 527], ['M', 742, 748.5, 552], ['M', 661, 667.5, 654],
  ['1', 592, 596.5, 530], ['1', 447, 452, 426], ['1', 455, 460, 496], ['1', 427, 432, 515], ['1', 953, 958, 517], ['1', 931, 936, 590], ['1', 947, 952, 668], ['1', 736, 741, 652], ['1', 793, 798, 667], ['1', 731, 736, 708], ['1', 485, 490, 792]
];
$('canvas').innerHTML = `<g stroke="#d8e5e0" shape-rendering="crispEdges">${g}</g><g stroke="#00008b" shape-rendering="crispEdges">${pages}</g>
<g fill="#fff" stroke="#000" shape-rendering="crispEdges">${body}</g><path d="${links}" fill="none" stroke="#000" shape-rendering="crispEdges"/>
<path d="${marks}" fill="none" stroke="#3c3cff" stroke-width="1"/>
<g font-family="'DejaVu Sans Condensed','DejaVu Sans',sans-serif" font-size="9" fill="#1c1c1c">${labels.map(([t, a, b, y]) => `<text x="${a}" y="${y}" textLength="${b - a}" lengthAdjust="spacingAndGlyphs">${t}</text>`).join('')}</g>
<path d="M592.500 276v16l4-3.500 2.500 6 3-1.500-2.500-5.500h5z" fill="#fff" stroke="#222"/>`;
</script>
</body>
</html>
